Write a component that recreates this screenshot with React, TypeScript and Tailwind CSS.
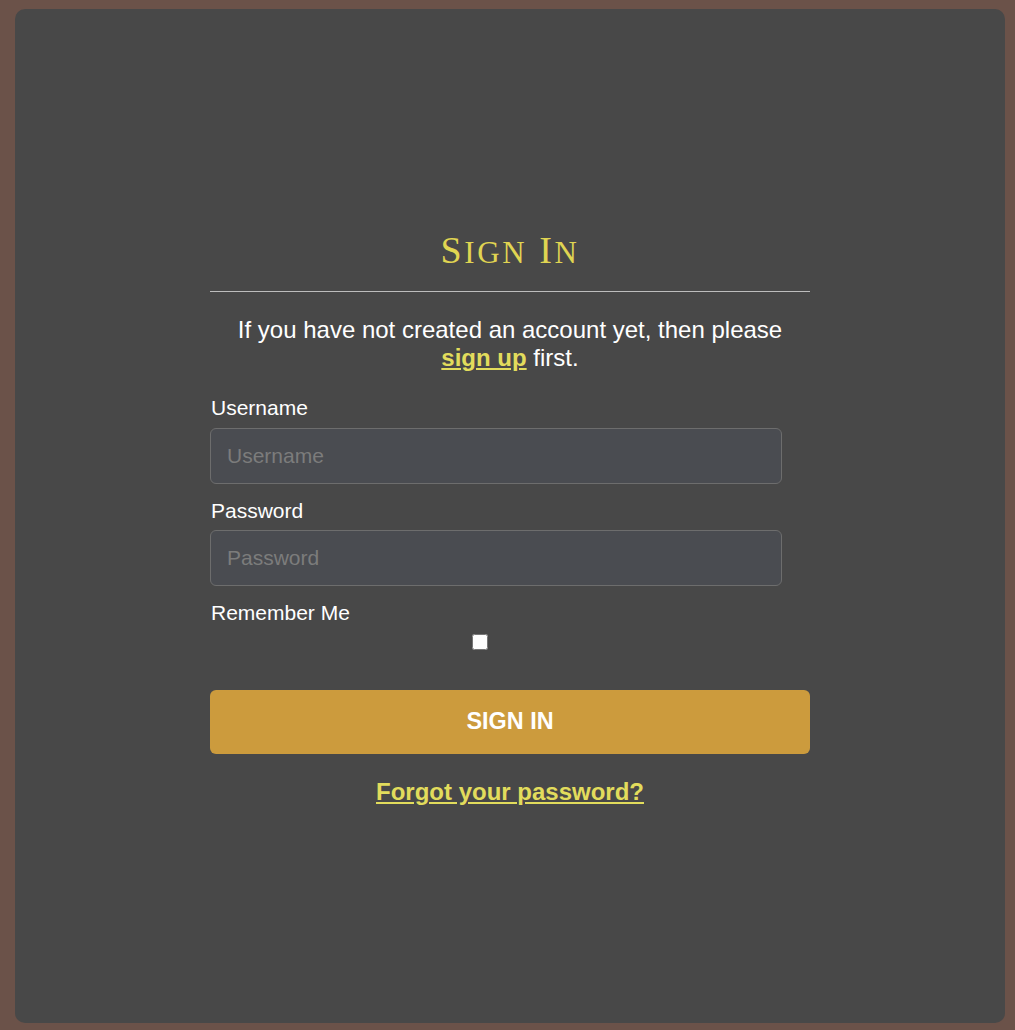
import React from "react";

export default function App() {
  return (
    <div
      className="w-[1015px] h-[1030px] bg-[#6b5249] pt-[9px] pl-[15px]"
      style={{ fontFamily: '"Liberation Sans", Arial, sans-serif' }}
    >
      <div className="w-[990px] h-[1014px] bg-[#484848] rounded-[10px] flex flex-col items-center pt-[219px]">
        <div className="w-[600px] flex flex-col">
          <h1
            className="h-[45px] text-center text-[38px] leading-[45px] text-[#e0d552] tracking-[2.6px] font-normal"
            style={{ fontFamily: '"Liberation Serif", "Times New Roman", serif' }}
          >
            S<span className="text-[31px] leading-none">IGN</span> I<span className="text-[31px] leading-none">N</span>
          </h1>
          <div className="mt-[18px] h-px bg-[#bdbdbd]" />
          <p className="mt-[24px] text-center text-[24px] leading-[28px] text-white px-[20px]">
            If you have not created an account yet, then please{" "}
            <a href="#" className="font-bold underline text-[#e2dc5c]">
              sign up
            </a>{" "}
            first.
          </p>
          <form className="flex flex-col mt-[24px]" onSubmit={(e) => e.preventDefault()}>
            <label className="pl-px text-[21px] leading-[24px] text-white">Username</label>
            <input
              type="text"
              placeholder="Username"
              className="mt-[8px] w-[572px] h-[56px] rounded-[6px] border border-[#6d6d6d] bg-[#4a4c51] pl-4 text-[21px] text-white placeholder:text-[#7c7c7c] outline-none"
            />
            <label className="pl-px mt-[15px] text-[21px] leading-[24px] text-white">Password</label>
            <input
              type="password"
              placeholder="Password"
              className="mt-[7px] w-[572px] h-[56px] rounded-[6px] border border-[#6d6d6d] bg-[#4a4c51] pl-4 text-[21px] text-white placeholder:text-[#7c7c7c] outline-none"
            />
            <label className="pl-px mt-[15px] text-[21px] leading-[24px] text-white">Remember Me</label>
            <div className="mt-[9px] h-[16px] flex">
              <input type="checkbox" className="m-0 ml-[262px] w-4 h-4" />
            </div>
            <button
              type="submit"
              className="mt-[40px] h-[64px] w-full rounded-[6px] bg-[#cc9b3d] text-white font-bold text-[23.4px] uppercase"
            >
              Sign In
            </button>
            <div className="mt-[24px] text-center">
              <a href="#" className="font-bold underline text-[24px] leading-[28px] text-[#e2dc5c]">
                Forgot your password?
              </a>
            </div>
          </form>
        </div>
      </div>
    </div>
  );
}
